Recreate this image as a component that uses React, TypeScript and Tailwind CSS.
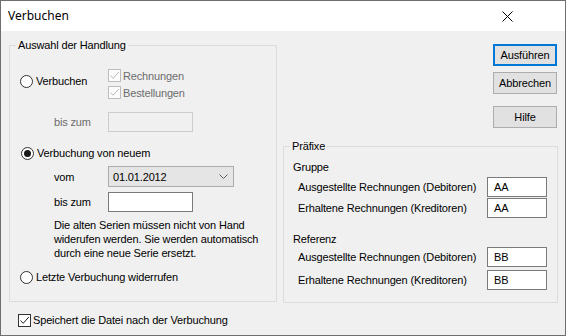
function Radio({ checked = false }: { checked?: boolean }) {
  return (
    <span className="w-[13px] h-[13px] rounded-full border border-[#333333] bg-white flex items-center justify-center shrink-0">
      {checked && <span className="w-[7px] h-[7px] rounded-full bg-[#1a1a1a]" />}
    </span>
  );
}

function Check({ disabled = false }: { disabled?: boolean }) {
  return (
    <span
      className={
        disabled
          ? 'w-[13px] h-[13px] border border-[#bcbcbc] bg-[#fcfcfc] flex items-center justify-center shrink-0'
          : 'w-[13px] h-[13px] border border-[#333333] bg-white flex items-center justify-center shrink-0'
      }
    >
      <svg width="11" height="11" viewBox="0 0 11 11">
        <path d="M1.5 5.5 L4.2 8.3 L9.8 2" fill="none" stroke={disabled ? '#bcbcbc' : '#222222'} strokeWidth="1" />
      </svg>
    </span>
  );
}

function Button({ label, primary = false }: { label: string; primary?: boolean }) {
  return (
    <div
      className={
        primary
          ? 'w-[64px] h-[22px] border-2 border-[#0078d7] bg-[#e1e1e1] flex items-center justify-center'
          : 'w-[64px] h-[22px] border border-[#adadad] bg-[#e1e1e1] flex items-center justify-center'
      }
    >
      {label}
    </div>
  );
}

function PrefixRow({ label, value, className }: { label: string; value: string; className: string }) {
  return (
    <div className={`flex items-center justify-between pl-[5px] ${className}`}>
      <span>{label}</span>
      <div className="w-[60px] h-[20px] border border-[#7a7a7a] bg-white flex items-center pl-[6px]">{value}</div>
    </div>
  );
}

export default function App() {
  return (
    <div className="w-[566px] h-[336px] bg-[#f0f0f0] border border-[#6e6e6e] flex flex-col text-[11px] leading-[14px] tracking-[-0.15px] text-black font-['Liberation_Sans',Arial,sans-serif]">
      <div className="h-[30px] bg-white flex items-center justify-between pl-[7px] pr-[52px] shrink-0">
        <span className="text-[12px] tracking-normal font-['Noto_Sans',sans-serif]">Verbuchen</span>
        <svg width="11" height="11" viewBox="0 0 11 11">
          <path d="M0.5 0.5 L10.5 10.5 M10.5 0.5 L0.5 10.5" stroke="#000000" strokeWidth="1" />
        </svg>
      </div>

      <div className="flex items-start pl-[8px] gap-[6px]">
        <div className="flex flex-col mt-[14px] w-[268px]">
          <div className="relative h-[257px] border border-[#dcdcdc] pt-[21px] flex flex-col">
            <span className="absolute -top-[8px] left-[6px] bg-[#f0f0f0] px-[2px]">Auswahl der Handlung</span>

            <div className="flex items-start">
              <div className="flex items-center gap-[3px] pl-[10px] mt-[7px] w-[98px]">
                <Radio />
                <span>Verbuchen</span>
              </div>
              <div className="flex flex-col text-[#6d6d6d]">
                <div className="h-[17px] flex items-center gap-[2px]">
                  <Check disabled />
                  <span>Rechnungen</span>
                </div>
                <div className="h-[17px] flex items-center gap-[2px]">
                  <Check disabled />
                  <span>Bestellungen</span>
                </div>
              </div>
            </div>

            <div className="flex items-center mt-[11px] pl-[44px] text-[#6d6d6d]">
              <span className="w-[54px]">bis zum</span>
              <div className="w-[85px] h-[20px] border border-[#cccccc] bg-[#f0f0f0]" />
            </div>

            <div className="flex items-center gap-[3px] pl-[11px] mt-[14px]">
              <Radio checked />
              <span>Verbuchung von neuem</span>
            </div>

            <div className="flex items-center mt-[6px] pl-[44px]">
              <span className="w-[54px]">vom</span>
              <div className="w-[126px] h-[21px] border border-[#acacac] bg-[#e5e5e5] flex items-center justify-between pl-[4px] pr-[5px]">
                <span>01.01.2012</span>
                <svg width="9" height="5" viewBox="0 0 9 5">
                  <path d="M0.5 0.5 L4.5 4.5 L8.5 0.5" fill="none" stroke="#606060" strokeWidth="1" />
                </svg>
              </div>
            </div>

            <div className="flex items-center mt-[5px] pl-[44px]">
              <span className="w-[54px]">bis zum</span>
              <div className="w-[85px] h-[20px] border border-[#7a7a7a] bg-white" />
            </div>

            <p className="mt-[6px] pl-[44px]">
              Die alten Serien müssen nicht von Hand
              <br />
              widerufen werden. Sie werden automatisch
              <br />
              durch eine neue Serie ersetzt.
            </p>

            <div className="flex items-center gap-[3px] pl-[10px] mt-[10px]">
              <Radio />
              <span>Letzte Verbuchung widerrufen</span>
            </div>
          </div>

          <div className="flex items-center gap-[2px] pl-[9px] mt-[11px]">
            <Check />
            <span>Speichert die Datei nach der Verbuchung</span>
          </div>
        </div>

        <div className="flex flex-col mt-[13px] w-[275px]">
          <div className="flex flex-col items-end pr-[1px]">
            <Button label="Ausführen" primary />
            <div className="mt-[6px]">
              <Button label="Abbrechen" />
            </div>
            <div className="mt-[12px]">
              <Button label="Hilfe" />
            </div>
          </div>

          <div className="relative mt-[18px] h-[157px] border border-[#dcdcdc] pt-[13px] pl-[9px] pr-[10px] flex flex-col">
            <span className="absolute -top-[8px] left-[6px] bg-[#f0f0f0] px-[2px]">Präfixe</span>
            <span>Gruppe</span>
            <PrefixRow label="Ausgestellte Rechnungen (Debitoren)" value="AA" className="mt-[3px]" />
            <PrefixRow label="Erhaltene Rechnungen (Kreditoren)" value="AA" className="mt-[1px]" />
            <span className="mt-[14px]">Referenz</span>
            <PrefixRow label="Ausgestellte Rechnungen (Debitoren)" value="BB" className="mt-[1px]" />
            <PrefixRow label="Erhaltene Rechnungen (Kreditoren)" value="BB" className="mt-[3px]" />
          </div>
        </div>
      </div>
    </div>
  );
}
